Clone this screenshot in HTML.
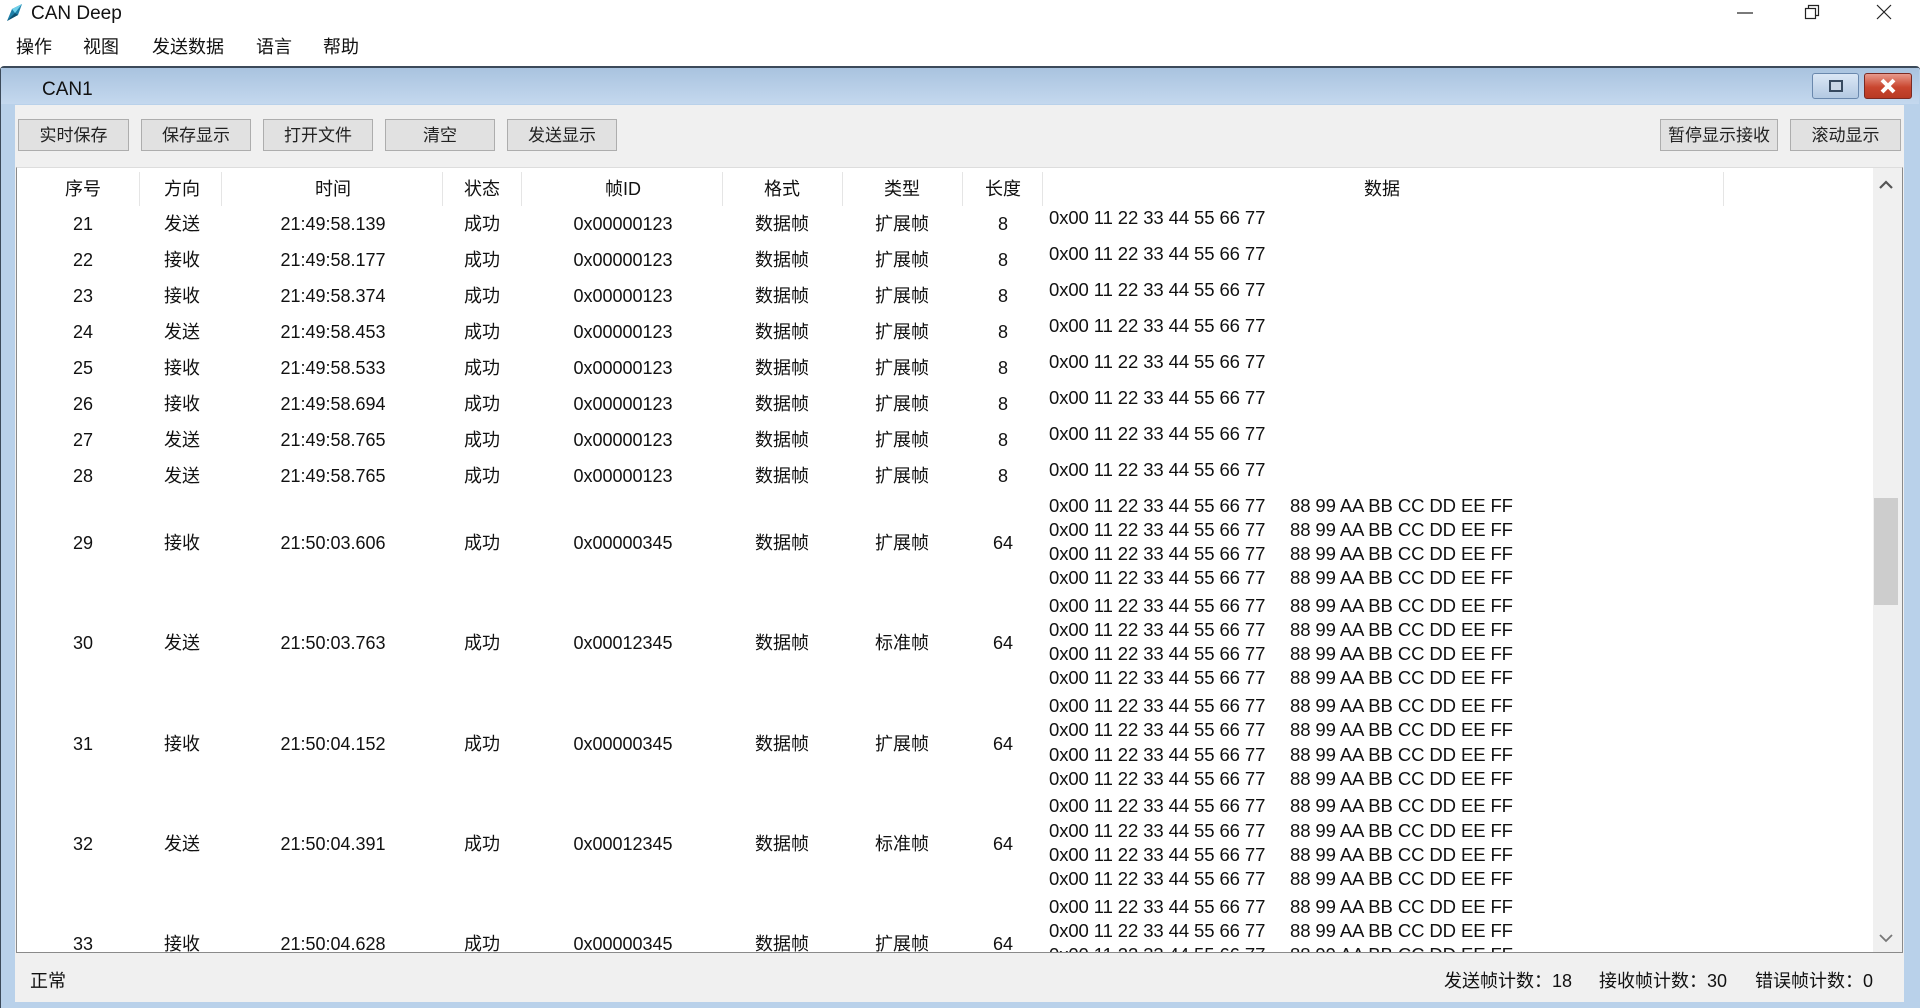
<!DOCTYPE html>
<html><head><meta charset="utf-8">
<style>
*{margin:0;padding:0;box-sizing:border-box}
body{width:1920px;height:1008px;overflow:hidden;background:#fff;font-family:"Liberation Sans","Noto Sans CJK SC",sans-serif;color:#111;position:relative}
.a{position:absolute;white-space:nowrap}
.menu span{position:absolute;top:36px;font-size:18px;line-height:22px}
.btn{position:absolute;top:119px;height:32px;background:#e1e1e1;border:1px solid #adadad;font-size:17px;line-height:31px;text-align:center;color:#222}
.c{position:absolute;width:200px;text-align:center;font-size:18px;line-height:24px;white-space:nowrap}
.d{position:absolute;font-size:18.5px;line-height:24px;white-space:nowrap;letter-spacing:-0.1px}
.hs{position:absolute;top:171px;width:1px;height:34px;background:#e5e5e5}
</style></head><body>
<svg class="a" style="left:4px;top:3px" width="20" height="20" viewBox="0 0 20 20"><path d="M3 18 L8 6 L18 1 L14 12 Z" fill="#1d7fa8"/><path d="M8 6 L18 1 L11 10 Z" fill="#6fd0ea"/><path d="M3 18 L11 10 L14 12Z" fill="#0d4f6e"/></svg>
<div class="a" style="left:31px;top:2px;font-size:19px;line-height:24px">CAN Deep</div>
<svg class="a" style="left:1735px;top:6px" width="20" height="14"><line x1="2" y1="7" x2="18" y2="7" stroke="#222" stroke-width="1.2"/></svg>
<svg class="a" style="left:1803px;top:3px" width="18" height="18"><rect x="2.5" y="5.5" width="10" height="10" fill="none" stroke="#222" stroke-width="1.2"/><path d="M5.5 5.5V2.5H15.5V12.5H12.5" fill="none" stroke="#222" stroke-width="1.2"/></svg>
<svg class="a" style="left:1875px;top:3px" width="18" height="18"><path d="M2 2L16 16M16 2L2 16" stroke="#222" stroke-width="1.2"/></svg>
<div class="menu"><span style="left:16px">操作</span><span style="left:83px">视图</span><span style="left:152px">发送数据</span><span style="left:256px">语言</span><span style="left:323px">帮助</span></div>
<div class="a" style="left:0;top:66px;width:1920px;height:942px;background:#b9d1ea;border-top:2px solid #3c4a5a;border-left:1px solid #3c4a5a;border-radius:4px 4px 0 0"></div>
<div class="a" style="left:1px;top:68px;width:1918px;height:36px;background:linear-gradient(#a9c3df,#c4d8ee)"></div>
<div class="a" style="left:42px;top:78px;font-size:19px;line-height:24px">CAN1</div>
<div class="a" style="left:1812px;top:73px;width:47px;height:26px;border:1px solid #6a88ad;border-radius:3px;background:linear-gradient(#dbe7f5,#b3c9e2)"></div>
<div class="a" style="left:1829px;top:80px;width:14px;height:12px;border:2px solid #374a60;background:#c9d6e6"></div>
<div class="a" style="left:1864px;top:73px;width:48px;height:26px;border:1px solid #7b2a22;border-radius:3px;background:linear-gradient(#e89a8c,#c9462f 55%,#b83a24)"></div>
<svg class="a" style="left:1878px;top:77px" width="20" height="18"><path d="M4 3L16 15M16 3L4 15" stroke="#fff" stroke-width="4"/></svg>
<div class="a" style="left:15px;top:105px;width:1889px;height:897px;background:#f0f0f0"></div>
<div class="btn" style="left:18px;width:111px">实时保存</div>
<div class="btn" style="left:141px;width:110px">保存显示</div>
<div class="btn" style="left:263px;width:110px">打开文件</div>
<div class="btn" style="left:385px;width:110px">清空</div>
<div class="btn" style="left:507px;width:110px">发送显示</div>
<div class="btn" style="left:1660px;width:118px">暂停显示接收</div>
<div class="btn" style="left:1790px;width:111px">滚动显示</div>
<div class="a" style="left:16px;top:167px;width:1887px;height:786px;border:1px solid #8a8a8a;border-top-color:#ddd;background:#fff;overflow:hidden">
<div style="position:absolute;left:-16px;top:-167px;width:1920px;height:1008px">
<div class="hs" style="left:138px"></div><div class="hs" style="left:220px"></div><div class="hs" style="left:441px"></div><div class="hs" style="left:520px"></div><div class="hs" style="left:721px"></div><div class="hs" style="left:841px"></div><div class="hs" style="left:961px"></div><div class="hs" style="left:1041px"></div><div class="hs" style="left:1722px"></div>
<div class="c" style="left:-18px;top:176px">序号</div><div class="c" style="left:81px;top:176px">方向</div><div class="c" style="left:232px;top:176px">时间</div><div class="c" style="left:381px;top:176px">状态</div><div class="c" style="left:522px;top:176px">帧ID</div><div class="c" style="left:681px;top:176px">格式</div><div class="c" style="left:801px;top:176px">类型</div><div class="c" style="left:902px;top:176px">长度</div><div class="c" style="left:1281px;top:176px">数据</div>
<div id="rows"></div>
</div>
<div class="a" style="left:1856px;top:0;width:30px;height:786px;background:#f0f0f0"></div>
<div class="a" style="left:1857px;top:330px;width:24px;height:107px;background:#cdcdcd"></div>
<svg class="a" style="left:1860px;top:10px" width="18" height="14"><path d="M3 10L9 4L15 10" fill="none" stroke="#555" stroke-width="2.2"/></svg>
<svg class="a" style="left:1860px;top:763px" width="18" height="14"><path d="M3 4L9 10L15 4" fill="none" stroke="#777" stroke-width="1.8"/></svg>
</div>
<div class="a" style="left:30px;top:969px;font-size:18px;line-height:24px">正常</div>
<div class="a" style="left:1444px;top:969px;font-size:18px;line-height:24px">发送帧计数：18</div>
<div class="a" style="left:1599px;top:969px;font-size:18px;line-height:24px">接收帧计数：30</div>
<div class="a" style="left:1755px;top:969px;font-size:18px;line-height:24px">错误帧计数：0</div>
<script>
var R=[["21","发送","21:49:58.139","0x00000123","扩展帧","8"],["22","接收","21:49:58.177","0x00000123","扩展帧","8"],["23","接收","21:49:58.374","0x00000123","扩展帧","8"],["24","发送","21:49:58.453","0x00000123","扩展帧","8"],["25","接收","21:49:58.533","0x00000123","扩展帧","8"],["26","接收","21:49:58.694","0x00000123","扩展帧","8"],["27","发送","21:49:58.765","0x00000123","扩展帧","8"],["28","发送","21:49:58.765","0x00000123","扩展帧","8"],["29","接收","21:50:03.606","0x00000345","扩展帧","64"],["30","发送","21:50:03.763","0x00012345","标准帧","64"],["31","接收","21:50:04.152","0x00000345","扩展帧","64"],["32","发送","21:50:04.391","0x00012345","标准帧","64"],["33","接收","21:50:04.628","0x00000345","扩展帧","64"]];
var cx=[82,181,332,481,622,781,901,1002],h="";
R.forEach(function(r,i){
 var cy=i<8?223+36*i:542+100.3*(i-8);
 var v=[r[0],r[1],r[2],"成功",r[3],"数据帧",r[4],r[5]];
 for(var k=0;k<8;k++)h+='<div class="c" style="left:'+(cx[k]-100)+'px;top:'+(cy-12)+'px">'+v[k]+'</div>';
 if(i<8)h+='<div class="d" style="left:1048px;top:'+(cy-18)+'px">0x00 11 22 33 44 55 66 77</div>';
 else for(var j=0;j<4;j++){var y=cy-37.5+24.2*j-12;h+='<div class="d" style="left:1048px;top:'+y+'px">0x00 11 22 33 44 55 66 77</div><div class="d" style="left:1289px;top:'+y+'px">88 99 AA BB CC DD EE FF</div>';}
});
document.getElementById("rows").innerHTML=h;
</script>
</body></html>
